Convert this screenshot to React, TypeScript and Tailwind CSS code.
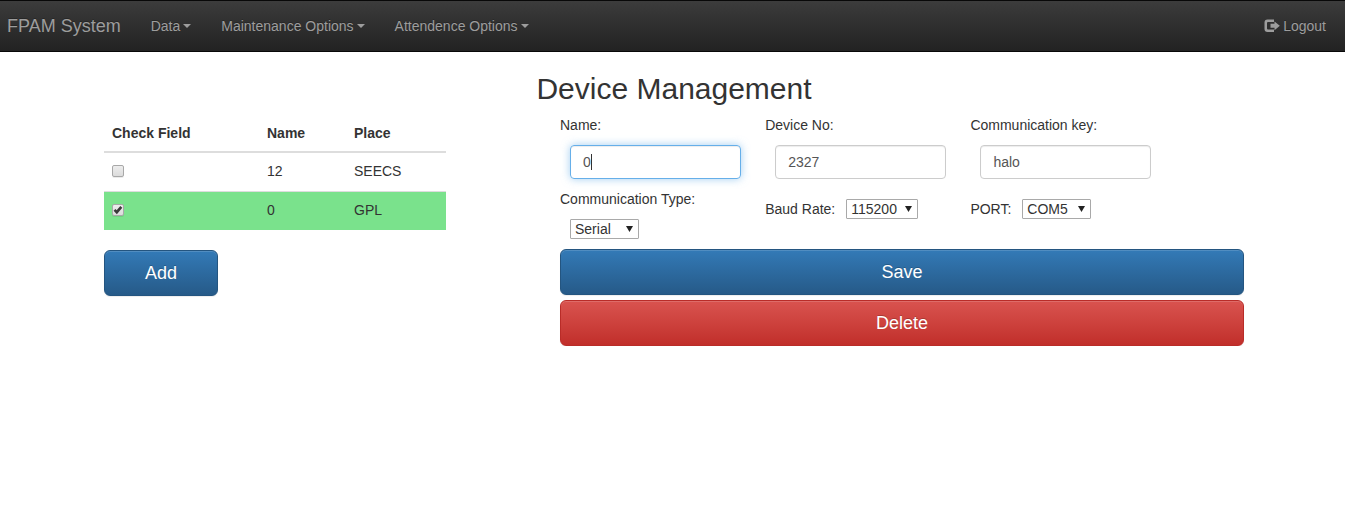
import { useState } from "react";
import type { ReactNode } from "react";

function NavMenu({ label }: { label: string }) {
  return (
    <li>
      <button
        type="button"
        aria-haspopup="menu"
        className="flex h-[50px] items-center gap-[3px] px-[15px] [text-shadow:0_-1px_0_rgba(0,0,0,0.25)]"
      >
        {label}
        <svg width="8" height="4" viewBox="0 0 8 4" fill="currentColor" aria-hidden="true">
          <path d="M0 0h8L4 4z" />
        </svg>
      </button>
    </li>
  );
}

function Navbar() {
  return (
    <nav className="flex h-[52px] items-center justify-between border-y border-[#080808] bg-linear-to-b from-[#3c3c3c] to-[#222222] pr-1 pl-[7px] text-[#9d9d9d]">
      <div className="flex items-center">
        <a href="#" className="pr-[15px] text-lg leading-5 [text-shadow:0_-1px_0_rgba(0,0,0,0.25)]">
          FPAM System
        </a>
        <ul className="flex">
          <NavMenu label="Data" />
          <NavMenu label="Maintenance Options" />
          <NavMenu label="Attendence Options" />
        </ul>
      </div>
      <a
        href="#logout"
        className="flex h-[50px] items-center gap-[3px] px-[15px] [text-shadow:0_-1px_0_rgba(0,0,0,0.25)]"
      >
        <svg width="16" height="14" viewBox="0 0 16 14" fill="currentColor" aria-hidden="true">
          <path d="M10 0.500H3.500A3 3 0 0 0 0.500 3.500v6.500a3 3 0 0 0 3 3H10V10.500H4a1 1 0 0 1-1-1V4a1 1 0 0 1 1-1h6z" />
          <path d="M10.500 2.400l5.300 4.400-5.300 4.400V8.800H6.500V4.800h4z" />
        </svg>
        Logout
      </a>
    </nav>
  );
}

type Device = { name: string; place: string };

const devices: Device[] = [
  { name: "12", place: "SEECS" },
  { name: "0", place: "GPL" },
];

function DeviceTable() {
  const [checked, setChecked] = useState([false, true]);
  return (
    <table className="w-full table-fixed border-separate border-spacing-0 text-left">
      <colgroup>
        <col className="w-[155px]" />
        <col className="w-[87px]" />
        <col />
      </colgroup>
      <thead>
        <tr className="[&>th]:border-b-2 [&>th]:border-[#dddddd] [&>th]:p-2">
          <th scope="col">Check Field</th>
          <th scope="col">Name</th>
          <th scope="col">Place</th>
        </tr>
      </thead>
      <tbody>
        {devices.map((device, i) => (
          <tr
            key={device.name}
            className={
              (checked[i] ? "bg-[#7ae28c] " : "") +
              (i > 0
                ? "[&>td]:h-[39px] [&>td]:border-t [&>td]:border-[#dddddd] [&>td]:px-2 [&>td]:pb-[2px]"
                : "[&>td]:h-[38px] [&>td]:px-2 [&>td]:pb-[2px]")
            }
          >
            <td>
              <span className="relative block size-3">
                <input
                  type="checkbox"
                  aria-label={"Select device " + device.name}
                  checked={checked[i]}
                  onChange={() => setChecked(checked.map((c, j) => (j === i ? !c : c)))}
                  className="block size-3 appearance-none rounded-[2px] border border-[#a8a8a8] bg-linear-to-b from-[#ededed] to-[#dcdcdc] shadow-[0_1px_0_rgba(0,0,0,0.08)]"
                />
                {checked[i] && (
                  <svg
                    className="pointer-events-none absolute inset-0"
                    width="12"
                    height="12"
                    viewBox="0 0 12 12"
                    fill="none"
                    stroke="#3a3a3a"
                    strokeWidth="2.600"
                    aria-hidden="true"
                  >
                    <path d="M2.500 5.800l2.300 2.400L9.300 2.800" />
                  </svg>
                )}
              </span>
            </td>
            <td>{device.name}</td>
            <td>{device.place}</td>
          </tr>
        ))}
      </tbody>
    </table>
  );
}

function TextField({ id, label, value, focused }: { id: string; label: string; value: string; focused?: boolean }) {
  // A steady caret is shown after the initial value until the user interacts with the field.
  const [steadyCaret, setSteadyCaret] = useState(Boolean(focused));
  const release = () => setSteadyCaret(false);
  return (
    <div>
      <label htmlFor={id} className="block">
        {label}
      </label>
      <div className="relative mt-[10px] ml-[10px] w-5/6 max-w-[171px]">
        <input
          id={id}
          type="text"
          defaultValue={value}
          autoFocus={focused}
          onKeyDown={release}
          onPointerDown={release}
          onBlur={release}
          className={
            (steadyCaret ? "caret-transparent " : "") +
            "block h-[34px] w-full rounded border border-[#cccccc] px-3 text-[#555555] shadow-[inset_0_1px_1px_rgba(0,0,0,0.075)] outline-none focus:border-[#66afe9] focus:shadow-[inset_0_1px_1px_rgba(0,0,0,0.075),0_0_8px_rgba(102,175,233,0.6)]"
          }
        />
        {steadyCaret && (
          <span className="pointer-events-none absolute top-[9px] left-[21px] h-4 w-px bg-[#333333]" aria-hidden="true" />
        )}
      </div>
    </div>
  );
}

function SelectBox({ id, options, wide }: { id: string; options: string[]; wide?: boolean }) {
  return (
    <span className="relative ml-[10px] inline-block">
      <select
        id={id}
        className={
          (wide ? "w-[72px]" : "w-[69px]") +
          " block h-5 appearance-none rounded-[1px] border border-[#a9a9a9] bg-white pl-1 leading-[18px] text-[#333333]"
        }
      >
        {options.map((o) => (
          <option key={o}>{o}</option>
        ))}
      </select>
      <svg
        className="pointer-events-none absolute top-[7px] right-[6px]"
        width="7"
        height="6"
        viewBox="0 0 7 6"
        fill="#222222"
        aria-hidden="true"
      >
        <path d="M0 0h7L3.500 6z" />
      </svg>
    </span>
  );
}

function BigButton({ danger, children }: { danger?: boolean; children: ReactNode }) {
  return (
    <button
      type="button"
      className={
        "block h-[46px] w-full rounded-md border text-lg text-white shadow-[inset_0_1px_0_rgba(255,255,255,0.15),0_1px_1px_rgba(0,0,0,0.075)] [text-shadow:0_-1px_0_rgba(0,0,0,0.2)] " +
        (danger
          ? "border-[#b92c28] bg-linear-to-b from-[#d9534f] to-[#c12e2a]"
          : "border-[#245580] bg-linear-to-b from-[#337ab7] to-[#265a88]")
      }
    >
      {children}
    </button>
  );
}

export default function App() {
  return (
    <div className="bg-white font-['Liberation_Sans',Arial,sans-serif] text-sm leading-5 text-[#333333]">
      <Navbar />
      <main className="pl-[3px]">
        <div className="mx-auto max-w-[1140px]">
          <h1 className="mt-5 mb-[10px] text-center text-3xl leading-[33px]">Device Management</h1>
          <div className="flex items-start justify-between">
            <section className="w-[30%]">
              <DeviceTable />
              <div className="mt-5 w-1/3">
                <BigButton>Add</BigButton>
              </div>
            </section>
            <form className="w-[60%]">
              <div className="grid grid-cols-[30%_30%_40%] gap-y-[10px]">
                <TextField id="name" label="Name:" value="0" focused />
                <TextField id="device-no" label="Device No:" value="2327" />
                <TextField id="communication-key" label="Communication key:" value="halo" />
                <div>
                  <label htmlFor="communication-type" className="mb-[10px] block">
                    Communication Type:
                  </label>
                  <SelectBox id="communication-type" options={["Serial", "TCP/IP"]} />
                </div>
                <div className="flex items-start gap-px pt-[10px]">
                  <label htmlFor="baud-rate">Baud Rate:</label>
                  <SelectBox id="baud-rate" options={["115200", "57600", "38400", "9600"]} wide />
                </div>
                <div className="flex items-start gap-px pt-[10px]">
                  <label htmlFor="port">PORT:</label>
                  <SelectBox id="port" options={["COM5", "COM4", "COM3", "COM2", "COM1"]} />
                </div>
              </div>
              <div className="mt-[10px] flex flex-col gap-[5px]">
                <BigButton>Save</BigButton>
                <BigButton danger>Delete</BigButton>
              </div>
            </form>
          </div>
        </div>
      </main>
    </div>
  );
}
